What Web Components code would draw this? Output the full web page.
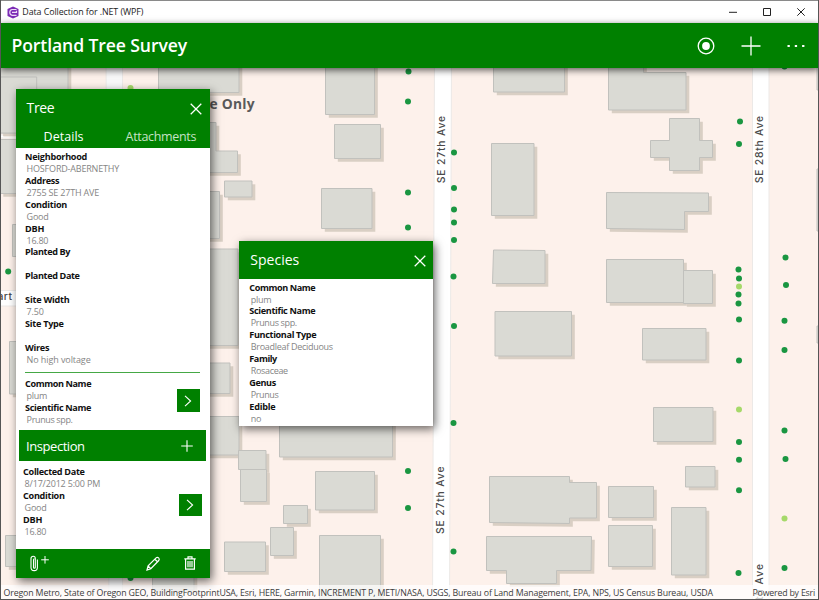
<!DOCTYPE html>
<html lang="en"><head><meta charset="utf-8"><title>Data Collection for .NET (WPF)</title>
<style>html,body{margin:0;width:819px;height:600px;overflow:hidden;font-family:"Open Sans","Noto Sans",sans-serif}</style></head>
<body><survey-app></survey-app>
<script>
const GREEN = '#008000';
function define(name, html, setup) {
  const tpl = document.createElement('template');
  tpl.innerHTML = html;
  customElements.define(name, class extends HTMLElement {
    connectedCallback() {
      if (this.shadowRoot) return;
      this.attachShadow({mode: 'open'}).append(tpl.content.cloneNode(true));
      if (setup) setup(this, this.shadowRoot);
    }
  });
}
const ctx = document.createElement('canvas').getContext('2d');

/* One line of text tracked to a given width */
define('fit-text', `<style>:host{display:block;white-space:nowrap}</style><slot></slot>`, el => {
  const s = getComputedStyle(el), t = el.textContent, w = +el.getAttribute('w');
  if (!w || !t) return;
  ctx.font = `${s.fontWeight} ${s.fontSize} ${s.fontFamily}`;
  el.style.letterSpacing = ((w - ctx.measureText(t).width) / t.length).toFixed(4) + 'px';
});

/* Line icons */
const ICONS = {
  close: [12, 12, '<path d="M.7.7 11.3 11.3M11.3.7.7 11.3" stroke-width="1.25"/>'],
  plus: [12, 12, '<path d="M6 .2V11.8M.2 6H11.8" stroke-width="1.1"/>'],
  bigplus: [20, 20, '<path d="M10 .5V19.5M.5 10H19.5" stroke-width="1.3"/>'],
  chevron: [8, 12, '<path d="M1 .8 6.6 6 1 11.2" stroke-width="1.1"/>'],
  locate: [18, 18, '<circle cx="9" cy="9" r="7.8" stroke-width="1.3"/><circle cx="9" cy="9" r="3.9" fill="#fff" stroke="none"/>'],
  more: [18, 4, '<path d="M.5 1h2.3v2.1H.5zM7.8 1h2.3v2.1H7.8zM15.1 1h2.3v2.1h-2.3z" fill="#fff" stroke="none"/>'],
  clip: [20, 17, '<path d="M3.5 5V12.2Q3.5 13.2 4.4 13.2T5.3 12.2V3.5Q5.3 1.2 3.2 1.2T1 3.5V12.5Q1 15.6 4.2 15.6T7.4 12.5V4.5M3.5 5Q3.5 3.8 4.4 3.8" stroke-width="1.1"/><path d="M15 1V8.6M11.2 4.8H18.8" stroke-width="1"/>'],
  pencil: [14, 15, '<path d="M1 14 2.1 9.9 10.1 1.9Q11.3.7 12.6 1.9 13.9 3.1 12.8 4.5L4.8 12.7ZM8.8 3.2 11.5 5.8M2.1 9.9 4.8 12.7" stroke-width="1.2"/>'],
  trash: [12, 14, '<path d="M.3 2.8H11.7M4 2.8V.8H8V2.8M1.6 3V13.2H10.4V3M4 5V11.3M6 5V11.3M8 5V11.3" stroke-width="1.2"/>'],
  min: [8, 8, '<path d="M0 4.3H8" stroke-width="1"/>'],
  max: [8, 8, '<path d="M.5.5H7.5V7.5H.5Z" stroke-width="1"/>'],
  x: [8, 8, '<path d="M.3.3 7.7 7.7M7.7.3.3 7.7" stroke-width="1"/>']
};
define('line-icon', `<style>:host{display:block;flex:none}svg{display:block;fill:none;stroke:currentColor;overflow:visible}</style>`, (el, r) => {
  const [w, h, body] = ICONS[el.getAttribute('name')];
  r.innerHTML += `<svg width="${w}" height="${h}" viewBox="0 0 ${w} ${h}">${body}</svg>`;
});

define('title-bar', `<style>
:host{display:flex;align-items:center;height:22px;padding:0 14px 0 7px;background:#fff;color:#222;font-size:8.9px;border-top:1px solid #8a8a8a}
svg{flex:none;margin-right:3.3px} fit-text{flex:1;line-height:22px} line-icon+line-icon{margin-left:26px}</style>
<svg width="12" height="13" viewBox="0 0 12 13"><path d="M6 .5 11.5 3V10L6 12.5.5 10V3Z" fill="#7b2ab5"/><path d="M9.5 3.5H5.2Q2.8 3.7 2.8 6.3T5.2 9.4H9.5M5 6.4H9.5V4.8" fill="none" stroke="#eddcf7" stroke-width="1.2"/></svg>
<fit-text w="121">Data Collection for .NET (WPF)</fit-text>
<line-icon name="min"></line-icon><line-icon name="max"></line-icon><line-icon name="x"></line-icon>`);

define('app-bar', `<style>
:host{display:flex;align-items:center;box-sizing:border-box;height:45px;padding:0 14px 0 11.5px;background:${GREEN};color:#fff;box-shadow:0 2px 7px rgba(0,0,0,.65);position:relative}
fit-text{font-size:17.6px;font-weight:600;line-height:45px;flex:1}
line-icon[name=bigplus]{margin:0 26px 0 26px}</style>
<fit-text w="175.5">Portland Tree Survey</fit-text>
<line-icon name="locate"></line-icon><line-icon name="bigplus"></line-icon><line-icon name="more"></line-icon>`);

/* Attribute label above its value */
define('data-field', `<style>:host{display:block;height:23.85px;font-size:9.1px;line-height:12px}
.l{font-weight:700;color:#111}.v{color:#858585;padding-left:1.5px;font-size:9px}</style>`, (el, r) => {
  const g = k => el.getAttribute(k) || '';
  r.innerHTML += `<fit-text class="l" w="${g('lw')}">${g('label')}</fit-text><fit-text class="v" w="${g('vw')}">${g('value')}</fit-text>`;
});
define('go-button', `<style>:host{display:grid;place-items:center;width:22.5px;height:22.5px;background:${GREEN};color:#fff;flex:none}</style><line-icon name="chevron"></line-icon>`);

define('popup-panel', `<style>
:host{display:flex;flex-direction:column;position:absolute;background:#fff;box-shadow:2px 3px 9px rgba(0,0,0,.6);box-sizing:border-box}
header{background:${GREEN};color:#fff;flex:none}
.top{display:flex;justify-content:space-between;align-items:center;height:37.5px;padding:0 7.5px 0 11px;font-size:14px}
line-icon{margin-top:3px}</style>
<header><div class="top"><slot name="title"></slot><line-icon name="close"></line-icon></div><slot name="tabs"></slot></header><slot></slot>`);

define('tree-panel', `<style>
popup-panel{left:15.6px;top:89px;width:194px;height:489px}
.tabs{display:flex;justify-content:space-between;height:21.5px;padding:0 13.5px 0 28px;font-size:12.5px;line-height:19px}
.tabs :last-child{color:#c5e2c5}
.body{padding:3px 10px 0 9.5px;height:221.5px;box-sizing:border-box}
.rel{display:flex;justify-content:space-between;align-items:center;margin:0 10px 0 9.5px;padding-top:5px;height:53px;box-sizing:border-box;border-top:1px solid #45a845;margin-bottom:4.5px}
.rel go-button{margin-top:-2px}
.bar{display:flex;justify-content:space-between;align-items:center;height:31.5px;margin:0 4px 0 3.5px;padding:0 12.5px 0 7px;background:${GREEN};color:#fff;font-size:13px}
.bar fit-text{padding-top:2px}.bar line-icon{margin-top:2px}
.ins{display:flex;justify-content:space-between;padding:5.2px 8px 0 7.5px}
.ins go-button{margin-top:27.5px}
footer{display:flex;align-items:center;height:29.5px;margin-top:auto;background:${GREEN};color:#fff;padding:0 14px;}
footer :nth-child(2){margin-left:auto;margin-right:24px}</style>
<popup-panel><fit-text slot="title" w="27.5">Tree</fit-text>
<div slot="tabs" class="tabs"><fit-text w="40">Details</fit-text><fit-text w="70.5">Attachments</fit-text></div>
<div class="body">
<data-field label="Neighborhood" lw="62" value="HOSFORD-ABERNETHY" vw="92.5"></data-field>
<data-field label="Address" lw="34" value="2755 SE 27TH AVE" vw="72.5"></data-field>
<data-field label="Condition" lw="42" value="Good" vw="22"></data-field>
<data-field label="DBH" lw="19" value="16.80" vw="21.5"></data-field>
<data-field label="Planted By" lw="45"></data-field>
<data-field label="Planted Date" lw="54.5"></data-field>
<data-field label="Site Width" lw="44.5" value="7.50" vw="17"></data-field>
<data-field label="Site Type" lw="38.5"></data-field>
<data-field label="Wires" lw="24" value="No high voltage" vw="64"></data-field></div>
<div style="height:2.5px;flex:none"></div>
<div class="rel"><div><data-field label="Common Name" lw="66" value="plum" vw="20.5"></data-field><data-field label="Scientific Name" lw="66" value="Prunus spp." vw="46"></data-field></div><go-button></go-button></div>
<div class="bar"><fit-text w="58.5">Inspection</fit-text><line-icon name="plus"></line-icon></div>
<div class="ins"><div><data-field label="Collected Date" lw="61.5" value="8/17/2012 5:00 PM" vw="75.5"></data-field><data-field label="Condition" lw="41.5" value="Good" vw="22"></data-field><data-field label="DBH" lw="19" value="16.80" vw="21.5"></data-field></div><go-button></go-button></div>
<footer><line-icon name="clip"></line-icon><line-icon name="pencil"></line-icon><line-icon name="trash"></line-icon></footer></popup-panel>`);

define('species-panel', `<style>popup-panel{left:239.3px;top:241px;width:194px;height:185px}.body{padding:3px 10px 0}</style>
<popup-panel><fit-text slot="title" w="49">Species</fit-text><div class="body">
<data-field label="Common Name" lw="66" value="plum" vw="20.5"></data-field>
<data-field label="Scientific Name" lw="66" value="Prunus spp." vw="46"></data-field>
<data-field label="Functional Type" lw="67" value="Broadleaf Deciduous" vw="82"></data-field>
<data-field label="Family" lw="27.5" value="Rosaceae" vw="37"></data-field>
<data-field label="Genus" lw="26.5" value="Prunus" vw="27.5"></data-field>
<data-field label="Edible" lw="26" value="no" vw="10.5"></data-field></div></popup-panel>`);

/* Base map: streets, building footprints, tree points */
const rects = [[0,60,68,133],[0,139.5,30,193.5],[0,77,36.7,133],[12.5,224.5,30,256.5],[9.5,341.5,30,394],[5.5,535.5,30,566.5],[152.5,560,194,590],
[158.5,60,239,92.5],[224.5,181,252,197],[190,191.5,219.5,238.5],[190,249,238,345.5],[190,363,230,393.5],[190,416.5,239,455],
[238.5,450.5,266,469.5],[240.5,469.5,266.5,501.5],[283.5,505.5,307.5,523.5],[270.5,527.5,293.5,555.5],[224.5,542,265.5,571.5],[279.5,400,392.5,457],[315.5,471.5,374.5,510],[319.5,535.5,380.5,610],
[325.5,60,374.5,114.5],[334.5,124.5,380.5,158.5],[321.5,188.5,372,228.5],[493.5,60,564.5,92],[491.5,143.5,534,215.5],[495,311.5,571.5,356],[642.5,328.5,706,360],[653.5,407.5,713,441.5],[685.5,466.5,715,487],[608.5,486.5,653.5,517.5],[608.5,525.5,652.5,566.5],[671.5,507.5,706,575],[606.5,259.5,683.5,302.5],[683.5,270.5,712.5,303.5],[817,169,830,231],[817,326,830,343],[817,60,830,90]]
.map(([a,b,c,d]) => `${a},${b} ${c},${b} ${c},${d} ${a},${d}`);
const polys = rects.concat([
'493.5,250 545,250.5 545,283.5 492.5,283.5',
'190,122.5 216,122.5 216,151 237.5,151 237.5,172.5 190,172.5',
'608.5,60 643.5,60 643.5,72.5 686,72.5 686,110 608.5,110',
'669.5,118.5 699.5,118.5 699.5,140.5 712.5,140.5 712.5,157.5 699.5,157.5 699.5,170.5 669.5,170.5 669.5,157.5 650.5,157.5 650.5,140.5 669.5,140.5',
'606.5,192.5 708.5,193 708.5,211.5 684.5,211.5 684.5,229.5 606.5,228.5',
'489.5,476.5 569.5,476.5 569.5,482.5 596.5,482.5 596.5,518 569.5,518 569.5,523.5 489.5,522.5',
'486.5,536.5 591.5,536.5 591,570.5 556.5,570.5 556.5,583.5 506.5,583.5 506.5,570.5 486.5,570.5']);
const dots = [[408.5,71.5],[408,101.5],[408,192.5],[408,227.5],[454,152.5],[454,188],[454,209.5],[454,222.5],[454,240],[453.5,276.5],[454,326],[453.5,423],[408,471],[408,508],[453.5,551.5],[740,121.5],[739,144],[784.5,66.5],[738.5,269.5],[739,278.5],[739,286.5,1],[738.5,294.5],[738.5,303.5],[739,319.5],[739,360.5],[785.5,257.5],[786,285],[784.5,320.8],[784.5,350],[739,409.5,1],[739,442],[739,459.7],[739,490.3],[738.5,573],[784.5,430.5],[785.5,459],[784.5,518.5,1],[784.5,568],[8.2,271.5],[130.5,88,1],[130.5,578]];
define('tree-map', `<style>:host{display:block;position:absolute;inset:0;background:#fdf1eb}svg{display:block}
.st{font:500 10.4px Inter,"Liberation Sans",sans-serif;fill:#4a4a4a}</style>`, (el, r) => {
  const P = polys.map(p => `<polygon points="${p}"/>`).join('');
  const st = (x, y, t) => `<text class="st" transform="translate(${x} ${y}) rotate(-90)" textLength="67.5">${t}</text>`;
  r.innerHTML += `<svg width="819" height="600" viewBox="0 0 819 600">
<g fill="#fff" stroke="#ece9e7"><path d="M434.5 60H451.5L449.5 610H432.5Z"/><path d="M752.5 60H769V610H752.5Z"/><path d="M106 60H122.5V610H109Z" fill="#f8f8f9"/><path d="M-2 135H30V138H-2ZM-2 290.5H30V306H-2Z"/></g>
<g fill="#d9cfc4" transform="translate(3.3 3.3)">${P}</g><g fill="#dadad4" stroke="#c1c1bd">${P}</g>
${dots.map(([x,y,l]) => `<circle cx="${x}" cy="${y}" r="3" fill="${l ? '#a6d96a' : '#1a9641'}"/>`).join('')}
${st(445.2,183.3,'SE 27th Ave')}${st(443.7,534,'SE 27th Ave')}${st(762.8,183.3,'SE 28th Ave')}
<text class="st" transform="translate(762.8 600) rotate(-90)" textLength="36">th Ave</text>
<text x="209.5" y="108.7" textLength="45" font-size="13.8" font-weight="700" fill="#5a5a5a">e Only</text>
<text x="-2.5" y="300.3" textLength="14.5" class="st">art</text></svg>`;
});
define('attribution-bar', `<style>:host{display:flex;justify-content:space-between;align-items:center;position:absolute;left:0;right:0;bottom:0;height:15.5px;padding:0 4px 0 3.5px;background:rgba(255,255,255,.72);font-size:8.8px;color:#3c3c3c}fit-text{padding-top:1px}</style>
<fit-text w="709.5">Oregon Metro, State of Oregon GEO, BuildingFootprintUSA, Esri, HERE, Garmin, INCREMENT P, METI/NASA, USGS, Bureau of Land Management, EPA, NPS, US Census Bureau, USDA</fit-text><fit-text w="62.5">Powered by Esri</fit-text>`);

define('survey-app', `<style>:host{display:block;position:relative;width:819px;height:600px;overflow:hidden}
.chrome{position:relative;display:flex;flex-direction:column}
.edge{position:absolute;inset:0;border:1px solid #555;border-top:0;border-width:0 1px 1px;pointer-events:none}</style>
<tree-map></tree-map><attribution-bar></attribution-bar>
<div class="chrome"><title-bar></title-bar><app-bar></app-bar></div>
<tree-panel></tree-panel><species-panel></species-panel><div class="edge"></div>`);
</script></body></html>
